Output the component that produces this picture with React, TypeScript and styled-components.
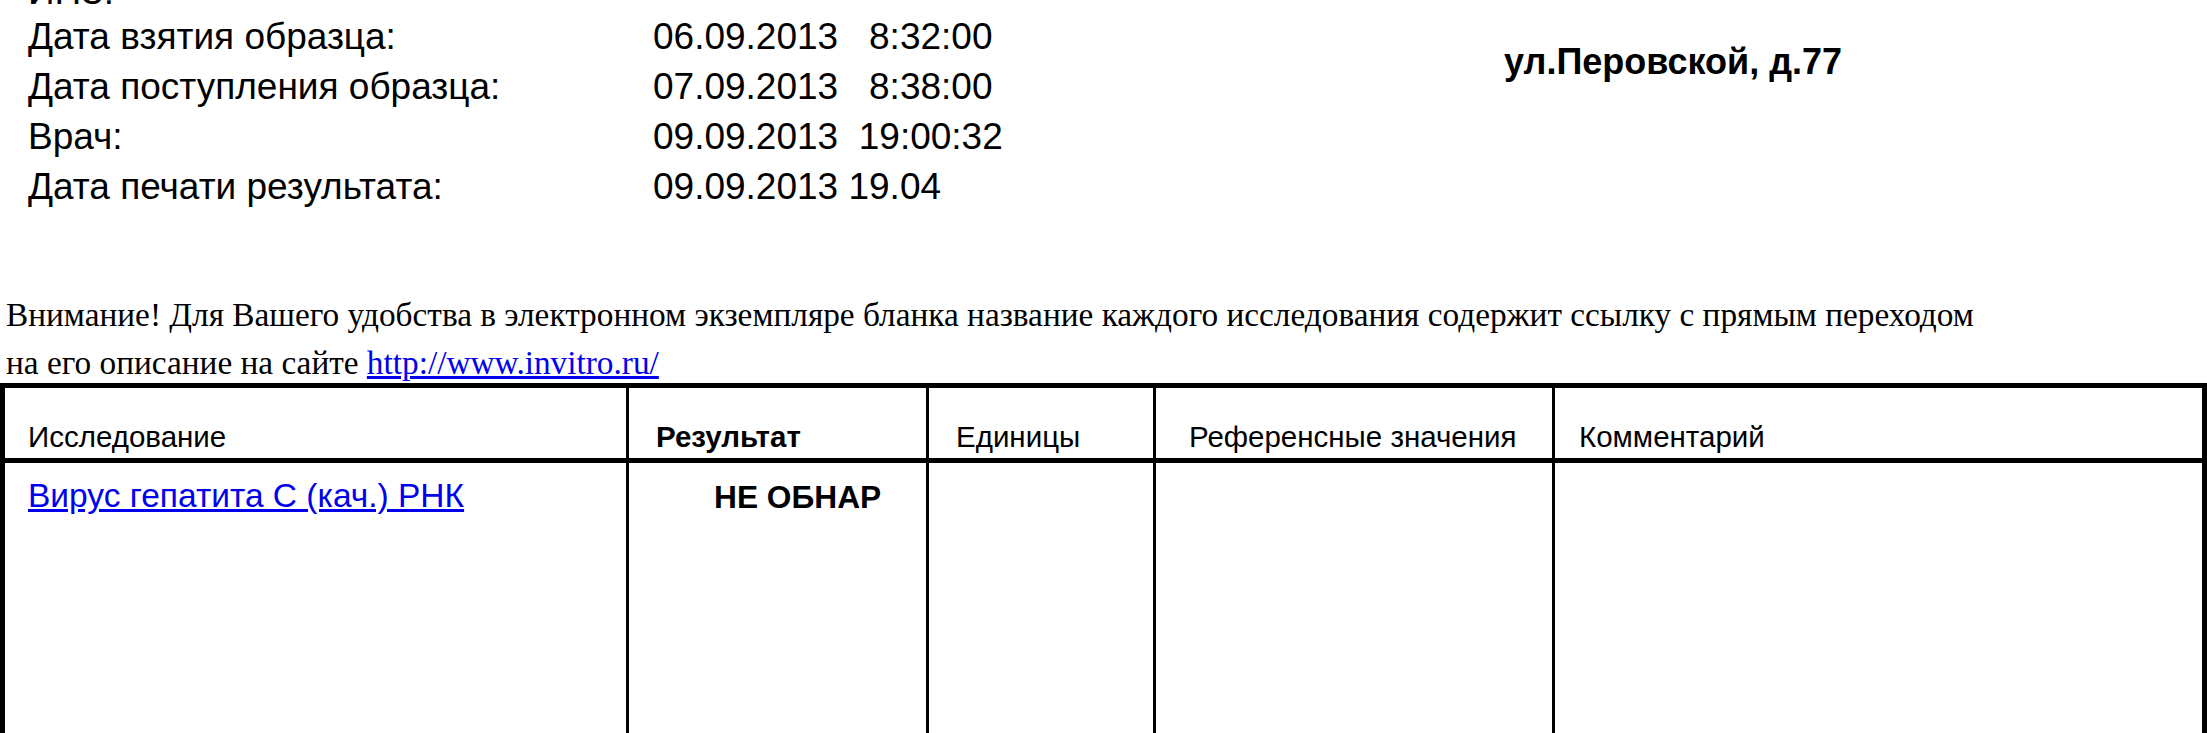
import React from "react";
import styled, { createGlobalStyle } from "styled-components";

const GlobalStyle = createGlobalStyle`
  html, body {
    margin: 0;
    padding: 0;
    background: #ffffff;
    color: #000000;
    font-family: "Liberation Sans", Arial, sans-serif;
  }
  body { overflow: hidden; }
`;

const Page = styled.div`
  width: 2207px;
  display: flex;
  flex-direction: column;
`;

const InfoSection = styled.section`
  display: flex;
  align-items: flex-start;
  margin-top: -29px;
`;

const InfoGrid = styled.div`
  display: grid;
  grid-template-columns: 625px 851px;
  padding-left: 28px;
  font-size: 37px;
`;

const Label = styled.div<{ $compact?: boolean }>`
  line-height: ${(p) => (p.$compact ? "41px" : "50px")};
  white-space: pre;
`;

const Value = styled.div<{ $compact?: boolean }>`
  line-height: ${(p) => (p.$compact ? "41px" : "50px")};
  white-space: pre;
`;

const Address = styled.div`
  margin-top: 66px;
  font-size: 36px;
  font-weight: bold;
  line-height: 50px;
  white-space: nowrap;
`;

const Notice = styled.p`
  margin: 79px 0 -4px 6px;
  font-family: "Liberation Serif", "Times New Roman", serif;
  font-size: 33.3px;
  line-height: 48px;
  white-space: nowrap;
`;

const Link = styled.a`
  color: #0000ee;
  text-decoration: underline;
`;

const Table = styled.div`
  display: grid;
  grid-template-columns: 621px 300px 227px 399px 650px;
  width: 2207px;
  box-sizing: border-box;
  border: 5px solid #000;
  border-bottom: none;
`;

const HeadCell = styled.div<{ $first?: boolean; $pad: number; $bold?: boolean }>`
  box-sizing: border-box;
  height: 75px;
  display: flex;
  align-items: flex-end;
  padding: 0 0 4px ${(p) => p.$pad}px;
  border-left: ${(p) => (p.$first ? "none" : "3px solid #000")};
  border-bottom: 5px solid #000;
  font-size: 29.5px;
  font-weight: ${(p) => (p.$bold ? "bold" : "normal")};
  white-space: nowrap;
`;

const BodyCell = styled.div<{ $first?: boolean; $pad: number; $bold?: boolean; $size?: number }>`
  box-sizing: border-box;
  min-height: 300px;
  padding: ${(p) => (p.$bold ? 16 : 14)}px 0 0 ${(p) => p.$pad}px;
  border-left: ${(p) => (p.$first ? "none" : "3px solid #000")};
  font-size: ${(p) => p.$size ?? 33}px;
  font-weight: ${(p) => (p.$bold ? "bold" : "normal")};
  white-space: nowrap;
`;

const rows: [string, string][] = [
  ["Дата взятия образца:", "06.09.2013   8:32:00"],
  ["Дата поступления образца:", "07.09.2013   8:38:00"],
  ["Врач:", "09.09.2013  19:00:32"],
  ["Дата печати результата:", "09.09.2013 19.04"],
];

const headers = [
  { text: "Исследование", pad: 23, bold: false },
  { text: "Результат", pad: 27, bold: true },
  { text: "Единицы", pad: 27, bold: false },
  { text: "Референсные значения", pad: 33, bold: false },
  { text: "Комментарий", pad: 24, bold: false },
];

export default function App() {
  return (
    <>
      <GlobalStyle />
      <Page>
        <InfoSection>
          <InfoGrid>
            <Label $compact>ИНЗ:</Label>
            <Value $compact />
            {rows.map(([l, v]) => (
              <React.Fragment key={l}>
                <Label>{l}</Label>
                <Value>{v}</Value>
              </React.Fragment>
            ))}
          </InfoGrid>
          <Address>ул.Перовской, д.77</Address>
        </InfoSection>

        <Notice>
          Внимание! Для Вашего удобства в электронном экземпляре бланка название каждого исследования содержит ссылку с прямым переходом
          <br />
          на его описание на сайте <Link href="#">http://www.invitro.ru/</Link>
        </Notice>

        <Table>
          {headers.map((h, i) => (
            <HeadCell key={h.text} $first={i === 0} $pad={h.pad} $bold={h.bold}>
              {h.text}
            </HeadCell>
          ))}
          <BodyCell $first $pad={23} $size={33.5}>
            <Link href="#">Вирус гепатита С (кач.) РНК</Link>
          </BodyCell>
          <BodyCell $pad={85} $bold $size={31.7}>
            НЕ ОБНАР
          </BodyCell>
          <BodyCell $pad={0} />
          <BodyCell $pad={0} />
          <BodyCell $pad={0} />
        </Table>
      </Page>
    </>
  );
}
